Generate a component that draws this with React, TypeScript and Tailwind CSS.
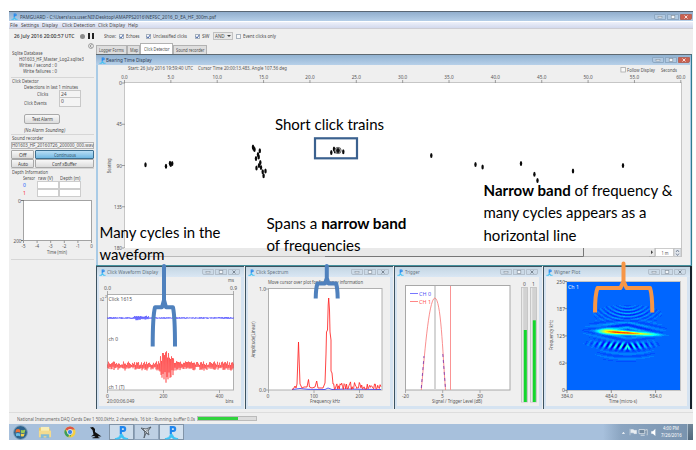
import { useLayoutEffect, useRef, useState, type ReactNode } from "react";

/* Single line label squeezed or stretched to an exact width. */
function Fit({ w, className = "", children }: { w: number; className?: string; children: ReactNode }) {
  const ref = useRef<HTMLSpanElement>(null);
  const [scale, setScale] = useState(1);
  useLayoutEffect(() => {
    if (ref.current) setScale(w / ref.current.offsetWidth);
  }, [w]);
  return (
    <span className={"inline-block shrink-0 text-left " + className} style={{ width: w }}>
      <span ref={ref} className="inline-block origin-left whitespace-nowrap" style={{ transform: `scaleX(${scale})` }}>
        {children}
      </span>
    </span>
  );
}

/* Chart label: centred on x unless an anchor is given. */
function Tx({ x, y, w, s = 5, fill = "#555", anchor = "middle", children }: {
  x: number; y: number; w?: number; s?: number; fill?: string; anchor?: "start" | "middle" | "end"; children: ReactNode;
}) {
  return (
    <text x={x} y={y} fontSize={s} fill={fill} textAnchor={anchor} textLength={w} lengthAdjust="spacingAndGlyphs">
      {children}
    </text>
  );
}

function VTx({ x, y, w, children }: { x: number; y: number; w: number; children: ReactNode }) {
  return (
    <text transform={`translate(${x} ${y}) rotate(-90)`} fontSize={5} fill="#555" textAnchor="middle" textLength={w} lengthAdjust="spacingAndGlyphs">
      {children}
    </text>
  );
}

function PamIcon({ className = "h-[7px] w-[7px]" }: { className?: string }) {
  return (
    <svg viewBox="0 0 16 16" className={"shrink-0 " + className}>
      <path d="M7.300 10V2.200h2.500a2 2 0 0 1 0 4.200H7.300" fill="none" stroke="#1f86ee" strokeWidth="2.300" />
      <path d="M1 14.500c3.500-.3 4.500-1.500 6-4.500h1.800c1.500 3 2.700 4.200 6.200 4.500-3.500 1-5 .3-7-1.500-2 1.800-3.500 2.500-7 1.500z" fill="#3cc3f6" stroke="#3cc3f6" />
    </svg>
  );
}

function WindowButtons({ active = false }: { active?: boolean }) {
  const base = "flex h-[6px] items-center justify-center border ";
  const plain = active ? "border-[#8da8c3] bg-[#b1c9e1]" : "border-[#b3bfcb] bg-[#ccdae7]";
  return (
    <div className="flex gap-px">
      <span className={base + "w-[12px] rounded-bl-[2px] " + plain}>
        <svg viewBox="0 0 6 4" className="h-[4px] w-[6px]">
          <rect x="1" y="1.5" width="4" height="1.5" fill="#f3f6f9" stroke="#8995a1" strokeWidth=".6" />
        </svg>
      </span>
      <span className={base + "w-[12px] " + plain}>
        <svg viewBox="0 0 6 4" className="h-[4px] w-[6px]">
          <rect x="1.2" y=".5" width="3.6" height="3" fill="#f3f6f9" stroke="#8995a1" strokeWidth=".7" />
        </svg>
      </span>
      <span className={base + "w-[12px] rounded-br-[2px] " + (active ? "border-[#b0655c] bg-[#cb6150]" : plain)}>
        <svg viewBox="0 0 6 4" className="h-[4px] w-[6px]">
          <path d="M1.5.5l3 3M4.5.5l-3 3" stroke={active ? "#f5dedb" : "#7b8793"} strokeWidth="1" />
        </svg>
      </span>
    </div>
  );
}

function SubWindow({ title, w, children }: { title: string; w: number; children: ReactNode }) {
  return (
    <section className="flex h-[143px] min-w-0 flex-col overflow-hidden border-l border-t border-[#3c5260] bg-[#d5e3f1]">
      <header className="flex h-[10px] shrink-0 items-center justify-between bg-gradient-to-b from-[#c4d6e3] to-[#dae7f4] pl-[2px] pr-[4px] text-[5.5px] leading-[10px] text-[#65727e]">
        <span className="flex items-center gap-[1px]">
          <PamIcon />
          <Fit w={w}>{title}</Fit>
        </span>
        <WindowButtons />
      </header>
      <div className="ml-[2px] mr-[3px] h-[129px] overflow-hidden bg-[#efefef]">{children}</div>
    </section>
  );
}

function Check({ on, w, children }: { on?: boolean; w: number; children: ReactNode }) {
  return (
    <span className="flex items-center gap-[2px]">
      <span className="flex h-[5px] w-[5px] items-center justify-center border border-[#a9b3be] bg-[#f8f8f8]">
        {on && (
          <svg viewBox="0 0 5 5" className="h-[5px] w-[5px] shrink-0">
            <path d="M.8 2.5l1.3 1.5L4.3.8" fill="none" stroke="#4a69ad" strokeWidth="1" />
          </svg>
        )}
      </span>
      <Fit w={w}>{children}</Fit>
    </span>
  );
}

function Group({ title, w, className, children }: { title: string; w: number; className: string; children?: ReactNode }) {
  return (
    <fieldset className={"mx-[1px] min-w-0 border-t border-[#d6d6d6] text-[5px] leading-[6px] " + className}>
      <Fit w={w} className="block pl-[1px]">{title}</Fit>
      {children}
    </fieldset>
  );
}

const btn = "flex items-center justify-center rounded-[1px] border border-[#a9a9a9] bg-gradient-to-b from-[#f8f8f8] to-[#dcdcdc] text-[#444]";

function Sidebar() {
  return (
    <aside className="h-[369px] w-[86px] shrink-0 pl-[1px] text-[#505050]">
      <div className="flex h-[7px] items-start justify-end pr-[1px]">
        <svg viewBox="0 0 6 6" className="h-[6px] w-[6px]">
          <circle cx="3" cy="3" r="2.4" fill="#f5f5f5" stroke="#777" strokeWidth=".7" />
          <path d="M3.6 1.7L2.2 3l1.4 1.3" fill="none" stroke="#444" strokeWidth=".7" />
        </svg>
      </div>
      <Group title="Sqlite Database" w={31} className="h-[27px] border-t-0">
        <div className="flex h-[6px] pl-[8px]"><Fit w={65}>H01603_HF_Master_Log2.sqlite3</Fit></div>
        <div className="flex h-[6px] pl-[8px]"><Fit w={38}>Writes / second : 0</Fit></div>
        <div className="flex h-[6px] pl-[12px]"><Fit w={34}>Write failures : 0</Fit></div>
      </Group>
      <Group title="Click Detector" w={27} className="h-[57px]">
        <div className="flex h-[6px] pl-[13px]"><Fit w={54}>Detections in last 1 minutes</Fit></div>
        <div className="flex h-[8px] items-center pl-[26px]">
          <Fit w={11}>Clicks</Fit>
          <span className="ml-[11px] h-[8px] w-[22px] border border-[#c8c8c8] bg-[#f4f4f4] pl-[1px]"><Fit w={6}>24</Fit></span>
        </div>
        <div className="flex h-[9px] items-center pl-[13px]">
          <Fit w={23}>Click Events</Fit>
          <span className="ml-[12px] h-[9px] w-[22px] border border-t-0 border-[#c8c8c8] bg-[#f4f4f4] pl-[1px]"><Fit w={3}>0</Fit></span>
        </div>
        <div className={btn + " ml-[13px] mt-[7px] h-[10px] w-[36px] rounded-[2px]"}><Fit w={21}>Test Alarm</Fit></div>
        <div className="mt-[3px] flex pl-[13px] italic"><Fit w={41}>(No Alarm Sounding)</Fit></div>
      </Group>
      <Group title="Sound recorder" w={31} className="h-[34px]">
        <div className="mt-[1px] h-[7px] w-[83px] border border-[#b5b5b5] bg-[#f2f2f2] leading-[5px]"><Fit w={81}>H01603_HF_20160726_200000_000.wav</Fit></div>
        <div className="mt-px grid w-[83px] grid-cols-[23px_1fr] grid-rows-[9px_9px] gap-x-px">
          <span className={btn}><Fit w={7}>Off</Fit></span>
          <span className="flex items-center justify-center rounded-[1px] border border-[#3d6f90] bg-gradient-to-b from-[#b9def4] to-[#72b9e3] text-[#31546a]"><Fit w={22}>Continuous</Fit></span>
          <span className={btn}><Fit w={10}>Auto</Fit></span>
          <span className={btn}><Fit w={25}>Conf xBuffer</Fit></span>
        </div>
      </Group>
      <Group title="Depth Information" w={36} className="h-[92px] border-b">
        <div className="mt-[1px] flex h-[5px] pl-[12px] leading-[5px]">
          <Fit w={12}>Sensor</Fit>
          <Fit w={15} className="ml-[3px]">raw (V)</Fit>
          <Fit w={20} className="ml-[7px]">Depth (m)</Fit>
        </div>
        {["0", "1"].map((n) => (
          <div key={n} className={"flex h-[8px] items-center pl-[12px] " + (n === "0" ? "text-blue-600" : "text-red-500")}>
            <Fit w={3}>{n}</Fit>
            <span className="ml-[11px] h-[8px] w-[22px] border border-[#cdcdcd] bg-white" />
            <span className="h-[8px] w-[22px] border border-[#cdcdcd] bg-white" />
          </div>
        ))}
        <svg viewBox="11 197 84 60" className="block h-[60px] w-[84px]">
          <rect x="23.5" y="200.5" width="68" height="40" fill="#fff" stroke="#a3a3a3" />
          <path d="M21 200.5h3M21 240.5h3" stroke="#777" />
          <Tx x={19.5} y={202.5} w={3}>0</Tx>
          <Tx x={17.5} y={243} w={8}>200</Tx>
          {[-5, -4, -3, -2, -1, 0].map((n, i) => (
            <g key={n}>
              <path d={`M${23.5 + i * 13.6} 240v3`} stroke="#999" />
              <Tx x={23.5 + i * 13.6} y={248} s={4.5}>{n}</Tx>
            </g>
          ))}
          <Tx x={57} y={254} w={20}>Time (min)</Tx>
        </svg>
      </Group>
    </aside>
  );
}

const clicks = [
  [145.5, 164.7], [166, 166.2], [170, 163.3], [172.2, 163.6], [170.8, 164.5],
  [253, 147], [254.5, 149.5], [253.6, 148.3], [259.8, 150.7], [258, 154.5], [256, 158.5], [258.7, 157], [260.3, 162.5], [259, 165.5],
  [256.5, 168], [261, 167.5], [265.5, 171], [262.7, 171.8], [263.6, 175.8],
  [331.3, 152.5], [334, 149], [335, 151], [343.3, 151.7],
  [431.3, 155.6], [475.5, 164.5], [482.6, 167], [521, 163.4], [534.4, 174.3], [537.5, 180.5], [573, 171], [623, 165.5],
];

function BearingPlot() {
  return (
    <svg viewBox="98 65 592 200" className="block h-[200px] w-[592px]">
      <rect x="124" y="83" width="557" height="165" fill="#fff" />
      <path d="M124.5 248V82.5H681.5V257" fill="none" stroke="#c6c6c6" />
      {Array.from({ length: 13 }, (_, i) => (
        <g key={i}>
          <path d={`M${124.5 + i * 46.36} 80v3`} stroke="#888" strokeWidth=".8" />
          <Tx x={124.5 + i * 46.36} y={79} w={i < 2 ? 6.5 : 9.3}>{(i * 5).toFixed(1)}</Tx>
        </g>
      ))}
      {[0, 45, 90, 135, 180].map((n, i) => (
        <g key={n}>
          <path d={`M122 ${83 + i * 41.25}h3`} stroke="#888" strokeWidth=".8" />
          <Tx x={122} y={85 + i * 41.25} anchor="end" w={[3, 5.5, 5.5, 8, 8][i]}>{n}</Tx>
        </g>
      ))}
      <VTx x={111} y={166} w={15}>Bearing</VTx>
      <Tx x={128} y={70} anchor="start" w={65}>Start: 26 July 2016 19:59:40 UTC</Tx>
      <Tx x={198} y={70} anchor="start" w={89}>Cursor Time 20:00:13.483, Angle 107.56 deg</Tx>
      <rect x="620.9" y="67.5" width="4.5" height="4.5" fill="#f8f8f8" stroke="#aaa" strokeWidth=".8" />
      <Tx x={627} y={71.5} anchor="start" w={28}>Follow Display</Tx>
      <Tx x={661} y={71.5} anchor="start" w={16}>Seconds</Tx>
      {clicks.map(([x, y], i) => <ellipse key={i} cx={x} cy={y} rx="1.2" ry="2.5" fill="#090909" />)}
      <circle cx="338" cy="150.5" r="3.2" fill="#bbb" stroke="#555" strokeWidth=".8" />
      <ellipse cx="338" cy="150.5" rx="1.8" ry="2.5" fill="#111" />
      <rect x="124" y="248" width="557" height="9" fill="#e9e9e9" />
      <path d="M124 256.5H325M583.5 248v8.5H651" fill="none" stroke="#bababa" />
      <path d="M325 256.5H583.5V248" fill="none" stroke="#777" />
      <path d="M649 256.5h6V248" fill="none" stroke="#aaa" strokeWidth=".8" />
      <path d="M651 250.3l2 2-2 2z" fill="#444" />
      <rect x="655.5" y="248.5" width="18" height="8" fill="#fff" stroke="#bbb" strokeWidth=".7" />
      <Tx x={665} y={254.5} w={7} s={4.5}>1 m</Tx>
      <rect x="674" y="248.5" width="7" height="8" fill="#e1e5eb" stroke="#bbb" strokeWidth=".7" />
      <path d="M676 252l1.5-2 1.5 2M676 253.5l1.5 2 1.5-2" fill="none" stroke="#66758a" strokeWidth=".8" />
    </svg>
  );
}

const noise = (i: number) => {
  const v = Math.sin(i * 127.1 + 3.7) * 43758.5453;
  return (v - Math.floor(v)) * 2 - 1;
};

/* Noisy trace whose zigzag height is set by base + burst at each x. */
function trace(center: number, base: (x: number) => number, burst: (x: number) => number, seed: number) {
  let d = "";
  for (let i = 0; i <= 252; i++) {
    const x = 107.5 + i * 0.5;
    const n = Math.abs(noise(i * 1.37 + seed));
    const h = base(x) * (0.15 + 0.85 * n) + burst(x) * (0.45 + 0.55 * n);
    d += `${i ? "L" : "M"}${x.toFixed(1)} ${(center + (i % 2 ? h : -h)).toFixed(1)}`;
  }
  return d;
}
const blueTrace = trace(318, () => 1, (x) => (x > 134 && x < 149 ? 1.3 : 0), 11);
const redTrace = trace(366, () => 4.6, (x) => 12.5 * Math.exp(-(((x - 166.5) / 6.5) ** 2)), 400);

function WaveformPlot() {
  return (
    <svg viewBox="99 277 142 129" className="block h-[129px] w-[142px]">
      <rect x="107.5" y="294.5" width="126" height="95.5" fill="#fff" stroke="#b0b0b0" />
      <Tx x={231} y={281.5} w={6}>ms</Tx>
      <path d="M107.5 291v4M233.5 291v4M107.5 390v3M163.5 390v3M219.5 390v3" stroke="#999" strokeWidth=".8" />
      <Tx x={107.5} y={290} w={7}>0.0</Tx>
      <Tx x={233.5} y={290} w={7}>0.9</Tx>
      <Tx x={100} y={301} w={4} anchor="start">x2</Tx>
      <Tx x={106} y={298} s={4}>2</Tx>
      <path d={blueTrace} fill="none" stroke="#4242ff" strokeWidth=".6" />
      <path d={redTrace} fill="none" stroke="#ff2020" strokeWidth=".5" />
      <Tx x={108.5} y={301} w={23.5} anchor="start">Click 1615</Tx>
      <Tx x={108.5} y={341} w={9.5} anchor="start">ch 0</Tx>
      <Tx x={108.5} y={389.3} w={16} anchor="start">ch 1 (T)</Tx>
      <Tx x={107.5} y={397.5}>0</Tx>
      <Tx x={163.5} y={397.5} w={8}>200</Tx>
      <Tx x={219.5} y={397.5} w={8}>400</Tx>
      <Tx x={107} y={403} anchor="start" w={27.5}>20:00:06.049</Tx>
      <Tx x={233.5} y={403} anchor="end" w={8}>bins</Tx>
    </svg>
  );
}

function spectrumTail(from: number, to: number, seed: number) {
  let d = "";
  for (let x = from; x < to; x += 0.8) {
    const h = x > 338 && x < 361 ? 8 : 5.5;
    d += `L${x.toFixed(1)} ${(389.3 - Math.abs(noise(x * 10 + seed)) ** 1.5 * h).toFixed(1)}`;
  }
  return d;
}
const spectrum =
  "M292 389.5L294 388L295 386L296 388L297 384L298.5 342L300 384L301 386L302 388L304 387L307 387L308.5 379.5L309.5 387L312 388L315 387L316.7 381L318 388L323 388L325 383L326 354L326.5 332L327.5 330L328.2 305L328.7 298L329.5 310L330 332L331 340L331 371L332 373L333 384" +
  spectrumTail(333.7, 381, 7);

function SpectrumPlot() {
  return (
    <svg viewBox="248 277 142 129" className="block h-[129px] w-[142px]">
      <rect x="268.5" y="288.5" width="113.5" height="101.5" fill="#fff" stroke="#b0b0b0" />
      <Tx x={268} y={283.5} anchor="start" w={95}>Move cursor over plot for frequency information</Tx>
      <path d="M265.5 289h3M265.5 390h3M268.5 390v3M314 390v3M359.5 390v3" stroke="#999" strokeWidth=".8" />
      <Tx x={266} y={291} anchor="end" w={7}>1.0</Tx>
      <Tx x={266} y={392} anchor="end" w={7}>0.0</Tx>
      <path d="M292 389.5L300 388.5L308 389.3L325 389.5L328 388L332 389.5L345 389L381 389.5" fill="none" stroke="#3030f0" strokeWidth=".8" />
      <path d={spectrum} fill="none" stroke="#f22" strokeWidth=".85" />
      <Tx x={268} y={397.5}>0</Tx>
      <Tx x={314} y={397.5} w={8}>100</Tx>
      <Tx x={359.5} y={397.5} w={8}>200</Tx>
      <Tx x={325} y={403} w={30}>Frequency kHz</Tx>
      <VTx x={255} y={339.5} w={36}>Amplitude(Linear)</VTx>
    </svg>
  );
}

function TriggerPlot() {
  return (
    <svg viewBox="397 277 142 129" className="block h-[129px] w-[142px]">
      <rect x="405.5" y="285.5" width="104.5" height="104.5" fill="#fff" stroke="#a8a8a8" />
      <path d="M435 286v104" stroke="#d5d5d5" strokeWidth="2" />
      <path d="M450.5 286v104" stroke="#fa9494" />
      <path d="M421.3 390C424 362 428.5 299 434.8 298C441 299 442.5 350 445.5 390" fill="none" stroke="#f77474" strokeWidth=".8" />
      <path d="M421.3 388L424 356M442.8 354L445.5 389" fill="none" stroke="#7431b2" strokeWidth=".8" strokeDasharray="3 3" />
      <path d="M410 293.5h8" stroke="#5454ff" strokeWidth=".8" />
      <path d="M410 301.5h8" stroke="#ff6767" strokeWidth=".8" />
      <Tx x={419} y={295.8} anchor="start" w={12} fill="#5454f5">CH 0</Tx>
      <Tx x={419} y={303.8} anchor="start" w={12} fill="#f55">CH 1</Tx>
      <path d="M405.5 390v3M442.7 390v3M480 390v3" stroke="#999" strokeWidth=".8" />
      <Tx x={405.5} y={397.5} w={7}>-20</Tx>
      <Tx x={442.5} y={397.5}>5</Tx>
      <Tx x={480} y={397.5} w={6}>30</Tx>
      <Tx x={457} y={403} w={50}>Signal / Trigger Level (dB)</Tx>
      {[[521.5, 330, 0], [530.5, 320.3, 1]].map(([x, y, n]) => (
        <g key={n}>
          <Tx x={x + 3} y={286}>{n}</Tx>
          <rect x={x} y="287.5" width="6" height="114.5" fill="#d2d2d2" stroke="#c1c1c1" strokeWidth=".8" />
          <path d={`M${x + 1.2} 288v114`} stroke="#eee" />
          <rect x={x + 2.3} y={y} width="3" height={402 - y} fill="#13d62c" />
        </g>
      ))}
    </svg>
  );
}

function jet(v: number) {
  const q = Math.round(Math.max(0, Math.min(1, v)) * 40) / 40;
  const ch = (c: number) => Math.round(255 * Math.max(0, Math.min(1, 1.5 - Math.abs(4 * q - c))));
  return `rgb(${ch(3)} ${ch(2)} ${ch(1)})`;
}

/* Time-frequency energy with its cross-term fringes. */
function energy(x: number, y: number) {
  const g = (v: number, c: number, s: number) => Math.exp(-(((v - c) / s) ** 2));
  const dx = x - 627;
  const ridge = 331 + (x - 603) * 0.06;
  const along = x < 618 ? g(x, 618, 13) : g(x, 618, 24);
  let v = 0.225;
  v += 0.56 * along * g(y, ridge, 1.5 + along * 0.5);
  v += 0.2 * g(x, 606, 8) * g(y, 330.5, 3.2);
  v += 0.2 * g(x, 642, 15) * g(y, ridge, 1.4);
  const r = Math.hypot(dx, (y - 297) * 1.4);
  v += 0.07 * Math.cos(r * 1.4) * g(x, 627, 27) * g(y, 313, 7);
  v += 0.085 * Math.cos((y - ridge) * 1.15 + (y < ridge ? -1 : 1) * Math.abs(dx) * 0.2) * g(x, 624, 31) * g(y, 330, 9) * (1 - along * g(y, ridge, 3));
  v += 0.24 * Math.cos(dx * 1.1 + (y - 345) * (dx < 0 ? 0.65 : -0.65)) * g(x, 622, 23) * g(y, 346 - Math.abs(dx) * 0.07, 3.2);
  v += 0.03 * Math.cos(Math.hypot(dx * 0.55, y - 322) * 1.2) * g(x, 625, 33) * g(y, 354, 8);
  return v;
}

const heat: { x: number; y: number; w: number; c: string }[] = [];
for (let y = 282; y < 390; y++) {
  let start = 567;
  let color = jet(energy(567, y));
  for (let x = 568; x <= 680; x++) {
    const c = x < 680 ? jet(energy(x, y)) : "";
    if (c !== color) {
      heat.push({ x: start, y, w: x - start, c: color });
      start = x;
      color = c;
    }
  }
}

function WignerPlot() {
  return (
    <svg viewBox="546 277 142 129" className="block h-[129px] w-[142px]">
      <rect x="566" y="281" width="115" height="110" fill="#c3c3c3" />
      <g shapeRendering="crispEdges">
        {heat.map((r, i) => <rect key={i} x={r.x} y={r.y} width={r.w} height="1" fill={r.c} />)}
      </g>
      <Tx x={568} y={288.5} anchor="start" w={11} fill="#e8f3ff">Ch 1</Tx>
      {[250, 187, 125, 62, 0].map((n, i) => (
        <g key={n}>
          <path d={`M564.5 ${281.5 + i * 27.2}h2.5`} stroke="#777" strokeWidth=".8" />
          <Tx x={565} y={283.5 + i * 27.2} anchor="end" w={[8.5, 8.5, 8.5, 6, 3][i]}>{n}</Tx>
        </g>
      ))}
      {[384, 484, 584].map((n, i) => (
        <g key={n}>
          <path d={`M${567 + i * 44.3} 390v3`} stroke="#777" strokeWidth=".8" />
          <Tx x={567 + i * 44.3} y={397.5} w={12}>{n.toFixed(1)}</Tx>
        </g>
      ))}
      <Tx x={623} y={403} w={28}>Time (micro-s)</Tx>
      <VTx x={553} y={335} w={30}>Frequency kHz</VTx>
    </svg>
  );
}

function Annotations() {
  return (
    <svg viewBox="0 0 696 450" className="pointer-events-none absolute left-0 top-0 h-[450px] w-[696px] font-['Lato','Liberation_Sans',sans-serif]">
      <rect x="315" y="138.3" width="42" height="20" fill="none" stroke="#3b618f" strokeWidth="2.2" />
      <g fill="none" strokeWidth="4" strokeLinejoin="round">
        <path d="M152.7 346.5C152.7 328 153 315 155 307.3H162L164 300V266V300L166 307.3H173C174.6 315 175 328 175 346.5" stroke="#4f81bd" />
        <path d="M315.7 298.5C315.8 291 316.3 287 317.5 283.5H325L326.8 278V266V278L328.5 283.5H336C337.2 287 337.6 291 337.7 298.5" stroke="#4f81bd" />
        <path d="M595 312.5C595 301 595.5 293 597.5 288H620.5L623.5 281V263.5V281L626.5 288H650C651.8 293 652.3 301 652.3 312.5" stroke="#f79646" />
      </g>
      <g fill="#000" fontSize="15">
        <text x="275" y="130" textLength="109" lengthAdjust="spacingAndGlyphs">Short click trains</text>
        <text x="99.5" y="237.7" textLength="121" lengthAdjust="spacingAndGlyphs">Many cycles in the</text>
        <text x="99.5" y="260" textLength="65" lengthAdjust="spacingAndGlyphs">waveform</text>
        <text x="266.5" y="228.7" textLength="140" lengthAdjust="spacingAndGlyphs">Spans a <tspan fontWeight="700">narrow band</tspan></text>
        <text x="266.5" y="251.3" textLength="94" lengthAdjust="spacingAndGlyphs">of frequencies</text>
        <text x="483.5" y="195.7" textLength="189" lengthAdjust="spacingAndGlyphs"><tspan fontWeight="700">Narrow band</tspan> of frequency &amp;</text>
        <text x="483.5" y="218" textLength="163" lengthAdjust="spacingAndGlyphs">many cycles appears as a</text>
        <text x="483.5" y="240.5" textLength="93" lengthAdjust="spacingAndGlyphs">horizontal line</text>
      </g>
    </svg>
  );
}

function Taskbar() {
  return (
    <footer className="flex h-[16px] items-center bg-[#a7c0dc]">
      <div className="flex w-[22px] justify-center">
        <svg viewBox="0 0 16 16" className="h-[15px] w-[15px]">
          <circle cx="8" cy="8" r="7.3" fill="#2c628d" stroke="#7a9bb4" />
          <path d="M3 5q2.5-1.5 4.5 0v3Q5 7 2.7 8.3z" fill="#e96f35" />
          <path d="M8.3 5q2.5 1.3 5-.3l-.8 3.5q-2 1-4.2 0z" fill="#9bca55" />
          <path d="M2.8 9q2.4-1.2 4.7 0v3q-2-1-4 0z" fill="#68bde6" />
          <path d="M8.3 9q2 1 4.2 0l-1 3q-1.5.7-3.2 0z" fill="#f5d14a" />
        </svg>
      </div>
      <div className="flex w-[28px] justify-center">
        <svg viewBox="0 0 15 14" className="h-[13px] w-[14px]">
          <path d="M1 2h5l1 1h6v9H1z" fill="#eac866" /><path d="M3 1h9v7H3z" fill="#f8eeb7" />
          <path d="M1 5h13v7H1z" fill="#f3db8e" /><path d="M3 13V9h9v4h-3v-2H6v2z" fill="#86bcd6" />
        </svg>
      </div>
      <div className="flex w-[22px] justify-center">
        <svg viewBox="0 0 14 14" className="h-[12px] w-[12px]">
          <circle cx="7" cy="7" r="6.5" fill="#f5cf45" />
          <path d="M7 7L1.4 3.7A6.5 6.5 0 0 1 12.7 4H7z" fill="#dc5347" />
          <path d="M7 7l-2 6.2A6.5 6.5 0 0 1 1.4 3.7L4.5 9 9 9l-2.3 4.5z" fill="#3a9c5b" />
          <circle cx="7" cy="7" r="3" fill="#3c82e4" stroke="#eee" />
        </svg>
      </div>
      <div className="flex w-[28px] justify-center">
        <svg viewBox="0 0 13 13" className="h-[13px] w-[13px]">
          <path d="M1 1.5l3-.5 2 2v3l3 2 3.5 2.5-3.5-.2.5 1.2h1v.8H3.5v-.8l3-.5-1.5-1-3 .5 2.5-2L3.5 4z" fill="#111" />
        </svg>
      </div>
      <span className="flex h-[16px] w-[25px] items-center justify-center border border-[#8194a8] bg-[#cddceb]"><PamIcon className="h-[15px] w-[15px]" /></span>
      <span className="flex h-[16px] w-[25px] items-center justify-center border border-[#8fa4bb] bg-[#bed0e3]">
        <svg viewBox="0 0 13 13" className="h-[13px] w-[13px]">
          <path d="M1 2l5 1 5-2-3 4 1 4-3-2-2 5 1-6z" fill="#e8edf0" stroke="#535c65" strokeWidth=".9" /><path d="M3 3l5 5M11 1L4 7" stroke="#535c65" strokeWidth=".8" />
        </svg>
      </span>
      <span className="flex h-[16px] w-[25px] items-center justify-center border border-[#8194a8] bg-[#d3e1ef]"><PamIcon className="h-[15px] w-[15px]" /></span>
      <div className="ml-auto flex h-[16px] w-[90px] items-center bg-gradient-to-r from-[#a7c0dc] via-[#8ba5c1] via-20% to-[#7892ad] text-white">
        <svg viewBox="0 0 44 12" className="ml-[18px] h-[10px] w-[36px]">
          <path d="M1 8l2-2 2 2z" fill="#fff" />
          <path d="M11 2v8M12 3h3l1 1h3v4h-3l-1-1h-3z" fill="#e9eef2" stroke="#e6ebf0" strokeWidth=".6" />
          <path d="M22 3h7v5h-7zM24 10h5M29 4l3-1v7" fill="#72899f" stroke="#e5ebf0" strokeWidth=".9" />
          <path d="M37 5h2l3-3v9l-3-3h-2z" fill="#fff" />
        </svg>
        <div className="ml-[3px] flex w-[22px] flex-col items-center text-[5px] leading-[7px]">
          <Fit w={16}>4:00 PM</Fit>
          <Fit w={21}>7/26/2016</Fit>
        </div>
        <span className="ml-auto h-[16px] w-[6px] border-l border-[#a8bbcb] bg-gradient-to-b from-[#6f8598] to-[#53687c]" />
      </div>
    </footer>
  );
}

export default function App() {
  return (
    <div className="relative h-[450px] w-[696px] overflow-hidden bg-white pl-[9px] pt-[11px] font-['Noto_Sans','Liberation_Sans',sans-serif] text-[5px] leading-[6px] text-[#4a4a4a]">
      <main className="flex h-[429px] w-[684px] flex-col bg-[#efefef]">
        <header className="flex h-[10px] shrink-0 items-center justify-between border-t border-[#596775] bg-gradient-to-b from-[#91aecd] to-[#b6cfe8] pl-[2px] pr-[1px] text-[5.5px] leading-[8px] text-[#314052]">
          <span className="flex items-center gap-[2px]">
            <PamIcon />
            <Fit w={196}>PAMGUARD - C:\Users\scs.user.NII\Desktop\AMAPPS2016\NEFSC_2016_D_EA_HF_300m.psf</Fit>
          </span>
          <WindowButtons active />
        </header>
        <nav className="flex h-[8px] shrink-0 items-center border-b border-t border-b-[#cdcdd4] border-t-white bg-gradient-to-b from-[#eef1fa] to-[#d3d9ed] pl-[1px] text-[5.5px] leading-[6px]">
          <Fit w={8}>File</Fit>
          <Fit w={18} className="ml-[3px]">Settings</Fit>
          <Fit w={16} className="ml-[3px]">Display</Fit>
          <Fit w={33} className="ml-[4px]">Click Detection</Fit>
          <Fit w={27} className="ml-[3px]">Click Display</Fit>
          <Fit w={10} className="ml-[3px]">Help</Fit>
        </nav>
        <div className="flex h-[14px] shrink-0 items-center pl-[5px]">
          <Fit w={60} className="text-[6px] font-medium text-[#333]">26 July 2016 20:00:57 UTC</Fit>
          <span className="ml-[6px] h-[5px] w-[5px] rounded-full bg-[#8a8a8a]" />
          <span className="ml-[3px] flex gap-[2px]"><i className="h-[6px] w-[2px] bg-[#222]" /><i className="h-[6px] w-[2px] bg-[#222]" /></span>
          <Fit w={12} className="ml-[10px]">Show:</Fit>
          <span className="ml-[3px] flex items-center">
            <Check on w={14}>Echoes</Check>
            <span className="ml-[6px]"><Check on w={34}>Unclassified clicks</Check></span>
            <span className="ml-[8px]"><Check on w={7}>SW</Check></span>
          </span>
          <span className="ml-[4px] flex h-[8px] w-[20px] items-center justify-between border border-[#c2c2c2] bg-[#e8e8e8] px-[1px]"><Fit w={10}>AND</Fit><i className="border-x-[2px] border-t-[2px] border-x-transparent border-t-[#444]" /></span>
          <span className="ml-[3px]"><Check w={33}>Event clicks only</Check></span>
        </div>
        <div className="flex h-[369px] shrink-0">
          <Sidebar />
          <div className="flex min-w-0 flex-1 flex-col pl-[1px]">
            <div className="flex h-[11px] items-end text-[#505050]">
              {([["Logger Forms", 30, 25], ["Map", 12, 8], ["Click Detector", 32, 26], ["Sound recorder", 33, 28]] as const).map(([t, bw, tw], i) => (
                <span key={t} className={"flex items-center justify-center border border-b-0 border-[#b2b2b2] " + (i === 2 ? "h-[11px] bg-white" : "h-[9px] bg-[#dedede]")} style={{ width: bw + 1 }}>
                  <Fit w={tw}>{t}</Fit>
                </span>
              ))}
            </div>
            <section className="h-[212px] w-[596px] shrink-0 border-b border-r border-t border-b-[#45929e] border-r-[#317b91] border-t-[#5e6971] bg-[#a9cbe6]">
              <header className="flex h-[10px] items-center justify-between bg-gradient-to-b from-[#91b2d1] to-[#b7d0e9] pl-[3px] pr-[1px] text-[5.5px] leading-[9px] text-[#304052]">
                <span className="flex items-center"><PamIcon /><Fit w={46}>Bearing Time Display</Fit></span>
                <WindowButtons active />
              </header>
              <div className="ml-[2px] mr-[1px] h-[200px] bg-[#efefef]"><BearingPlot /></div>
            </section>
            <div className="grid h-[143px] w-[596px] shrink-0 grid-cols-[148px_148px_148px_147px] gap-[1px] border-r-2 border-[#17212b]">
              <SubWindow title="Click Waveform Display" w={51}><WaveformPlot /></SubWindow>
              <SubWindow title="Click Spectrum" w={32}><SpectrumPlot /></SubWindow>
              <SubWindow title="Trigger" w={15}><TriggerPlot /></SubWindow>
              <SubWindow title="Wigner Plot" w={26}><WignerPlot /></SubWindow>
            </div>
          </div>
        </div>
        <div className="flex h-[12px] shrink-0 items-center border-t border-[#ddd] pl-[8px] text-[#666]">
          <Fit w={178}>National Instruments DAQ Cards Dev 1 500.0kHz, 2 channels, 16 bit : Running, buffer 0.0s</Fit>
          <span className="ml-[2px] h-[5px] w-[60px] border border-[#bbb] bg-[#ddd]"><i className="block h-[3px] w-[40px] bg-[#31d33e]" /></span>
        </div>
        <Taskbar />
      </main>
      <Annotations />
    </div>
  );
}
